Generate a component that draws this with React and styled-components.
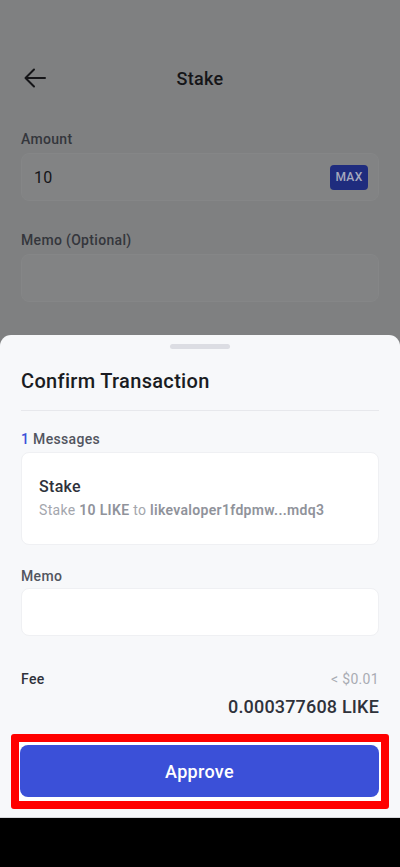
import React from 'react';
import styled, {createGlobalStyle} from 'styled-components';

var GlobalStyle = createGlobalStyle`
  html, body {
    margin: 0;
    padding: 0;
    background: #000;
  }
  body {
    font-family: Roboto, Inter, "Noto Sans", sans-serif;
    letter-spacing: 0.02em;
    -webkit-font-smoothing: antialiased;
  }
`;

var App = () => {
  // dimmed stake form behind, confirm sheet on top, android nav bar at bottom
  return (
    <Screen>
      <GlobalStyle />
      <Backdrop>
        <Header>
          <BackButton aria-label="back">
            <svg width="22" height="20" viewBox="0 0 22 20" fill="none">
              <path d="M21 10H2M10 1.5L1.5 10L10 18.5" stroke="#151518" strokeWidth="2" strokeLinecap="round" strokeLinejoin="round" />
            </svg>
          </BackButton>
          <HeaderTitle>Stake</HeaderTitle>
        </Header>

        <FieldLabel>Amount</FieldLabel>
        <DimInput>
          <AmountText>10</AmountText>
          <MaxBadge>MAX</MaxBadge>
        </DimInput>

        <FieldLabel $top={29}>Memo (Optional)</FieldLabel>
        <DimInput />
      </Backdrop>

      <Sheet>
        <Handle />
        <SheetTitle>Confirm Transaction</SheetTitle>
        <Divider />

        <SectionLabel><Count>1</Count> Messages</SectionLabel>
        <MessageCard>
          <MessageTitle>Stake</MessageTitle>
          <MessageBody>
            Stake <b>10 LIKE</b> to <b>likevaloper1fdpmw...mdq3</b>
          </MessageBody>
        </MessageCard>

        <SectionLabel $top={21}>Memo</SectionLabel>
        <MemoInput />

        <FeeRow>
          <FeeLabel>Fee</FeeLabel>
          <FeeUsd>&lt; $0.01</FeeUsd>
        </FeeRow>
        <FeeAmount>0.000377608 LIKE</FeeAmount>

        <ApproveFrame>
          <ApproveButton>Approve</ApproveButton>
        </ApproveFrame>
      </Sheet>

      <NavBar />
    </Screen>
  );
};

// styled components
var Screen = styled.div`
  width: 400px;
  height: 867px;
  display: flex;
  flex-direction: column;
  background: #7f8081;
  overflow: hidden;
`;

var Backdrop = styled.div`
  height: 335px;
  flex-shrink: 0;
  padding: 0 21px;
  box-sizing: border-box;
  display: flex;
  flex-direction: column;
`;

var Header = styled.div`
  height: 52px;
  margin-top: 52px;
  display: flex;
  align-items: center;
  justify-content: center;
  position: relative;
`;

var BackButton = styled.div`
  position: absolute;
  left: 3px;
  top: 16px;
  display: flex;
`;

var HeaderTitle = styled.div`
  font-size: 18px;
  font-weight: 500;
  color: #151518;
`;

var FieldLabel = styled.div`
  margin-top: ${p => (p.$top || 25)}px;
  font-size: 14px;
  font-weight: 500;
  color: #34363c;
  line-height: 20px;
`;

var DimInput = styled.div`
  margin-top: 4px;
  height: 48px;
  box-sizing: border-box;
  border-radius: 8px;
  background: #828384;
  border: 1px solid #858687;
  display: flex;
  align-items: center;
  justify-content: space-between;
  padding: 0 10px 0 12px;
`;

var AmountText = styled.span`
  font-size: 16px;
  color: #151518;
`;

var MaxBadge = styled.span`
  width: 38px;
  height: 25px;
  border-radius: 4px;
  background: #1f2c7e;
  color: #a6a9bd;
  font-size: 12px;
  font-weight: 500;
  display: flex;
  align-items: center;
  justify-content: center;
`;

var Sheet = styled.div`
  flex: 1;
  background: #f7f8fa;
  border-radius: 11px 11px 0 0;
  padding: 0 21px;
  display: flex;
  flex-direction: column;
  border-bottom: 1px solid #d7d8dc;
`;

var Handle = styled.div`
  align-self: center;
  width: 60px;
  height: 5px;
  border-radius: 3px;
  background: #dcdde3;
  margin-top: 9px;
`;

var SheetTitle = styled.div`
  margin-top: 18px;
  font-size: 20px;
  font-weight: 500;
  color: #1a1c22;
  line-height: 28px;
`;

var Divider = styled.div`
  margin-top: 15px;
  height: 1px;
  background: #e7e8ec;
`;

var SectionLabel = styled.div`
  margin-top: ${p => (p.$top || 18)}px;
  font-size: 14px;
  font-weight: 500;
  color: #52555f;
  line-height: 20px;
`;

var Count = styled.span`
  color: #3b50d8;
`;

var MessageCard = styled.div`
  margin-top: 3px;
  height: 93px;
  flex-shrink: 0;
  box-sizing: border-box;
  background: #fff;
  border-radius: 8px;
  border: 1px solid #eff0f3;
  padding: 0 17px;
  display: flex;
  flex-direction: column;
  justify-content: center;
  gap: 3px;
`;

var MessageTitle = styled.div`
  font-size: 16px;
  font-weight: 500;
  color: #2f323b;
  line-height: 20px;
`;

var MessageBody = styled.div`
  font-size: 14px;
  color: #a3a6ad;
  line-height: 20px;
  white-space: nowrap;

  b {
    font-weight: 600;
    color: #90939b;
  }
`;

var MemoInput = styled.div`
  margin-top: 2px;
  height: 48px;
  flex-shrink: 0;
  box-sizing: border-box;
  background: #fff;
  border-radius: 8px;
  border: 1px solid #eff0f3;
`;

var FeeRow = styled.div`
  margin-top: 33px;
  display: flex;
  justify-content: space-between;
  align-items: center;
  line-height: 20px;
`;

var FeeLabel = styled.span`
  font-size: 14px;
  font-weight: 500;
  color: #2f323b;
`;

var FeeUsd = styled.span`
  font-size: 14px;
  color: #a9acb3;
`;

var FeeAmount = styled.div`
  margin-top: 6px;
  text-align: right;
  font-size: 18px;
  font-weight: 500;
  letter-spacing: 0.01em;
  color: #2f323b;
  line-height: 24px;
`;

var ApproveFrame = styled.div`
  margin: 15px -10px 0 -10px;
  border: 8px solid #ff0000;
  border-radius: 3px;
  padding: 3px 2px 4px 1px;
  background: #fff;
`;

var ApproveButton = styled.button`
  width: 100%;
  height: 52px;
  border: none;
  border-radius: 8px;
  background: #3b50d8;
  color: #fff;
  font-family: inherit;
  letter-spacing: inherit;
  font-size: 18px;
  font-weight: 500;
`;

var NavBar = styled.div`
  height: 49px;
  flex-shrink: 0;
  background: #000;
`;

export default App;
